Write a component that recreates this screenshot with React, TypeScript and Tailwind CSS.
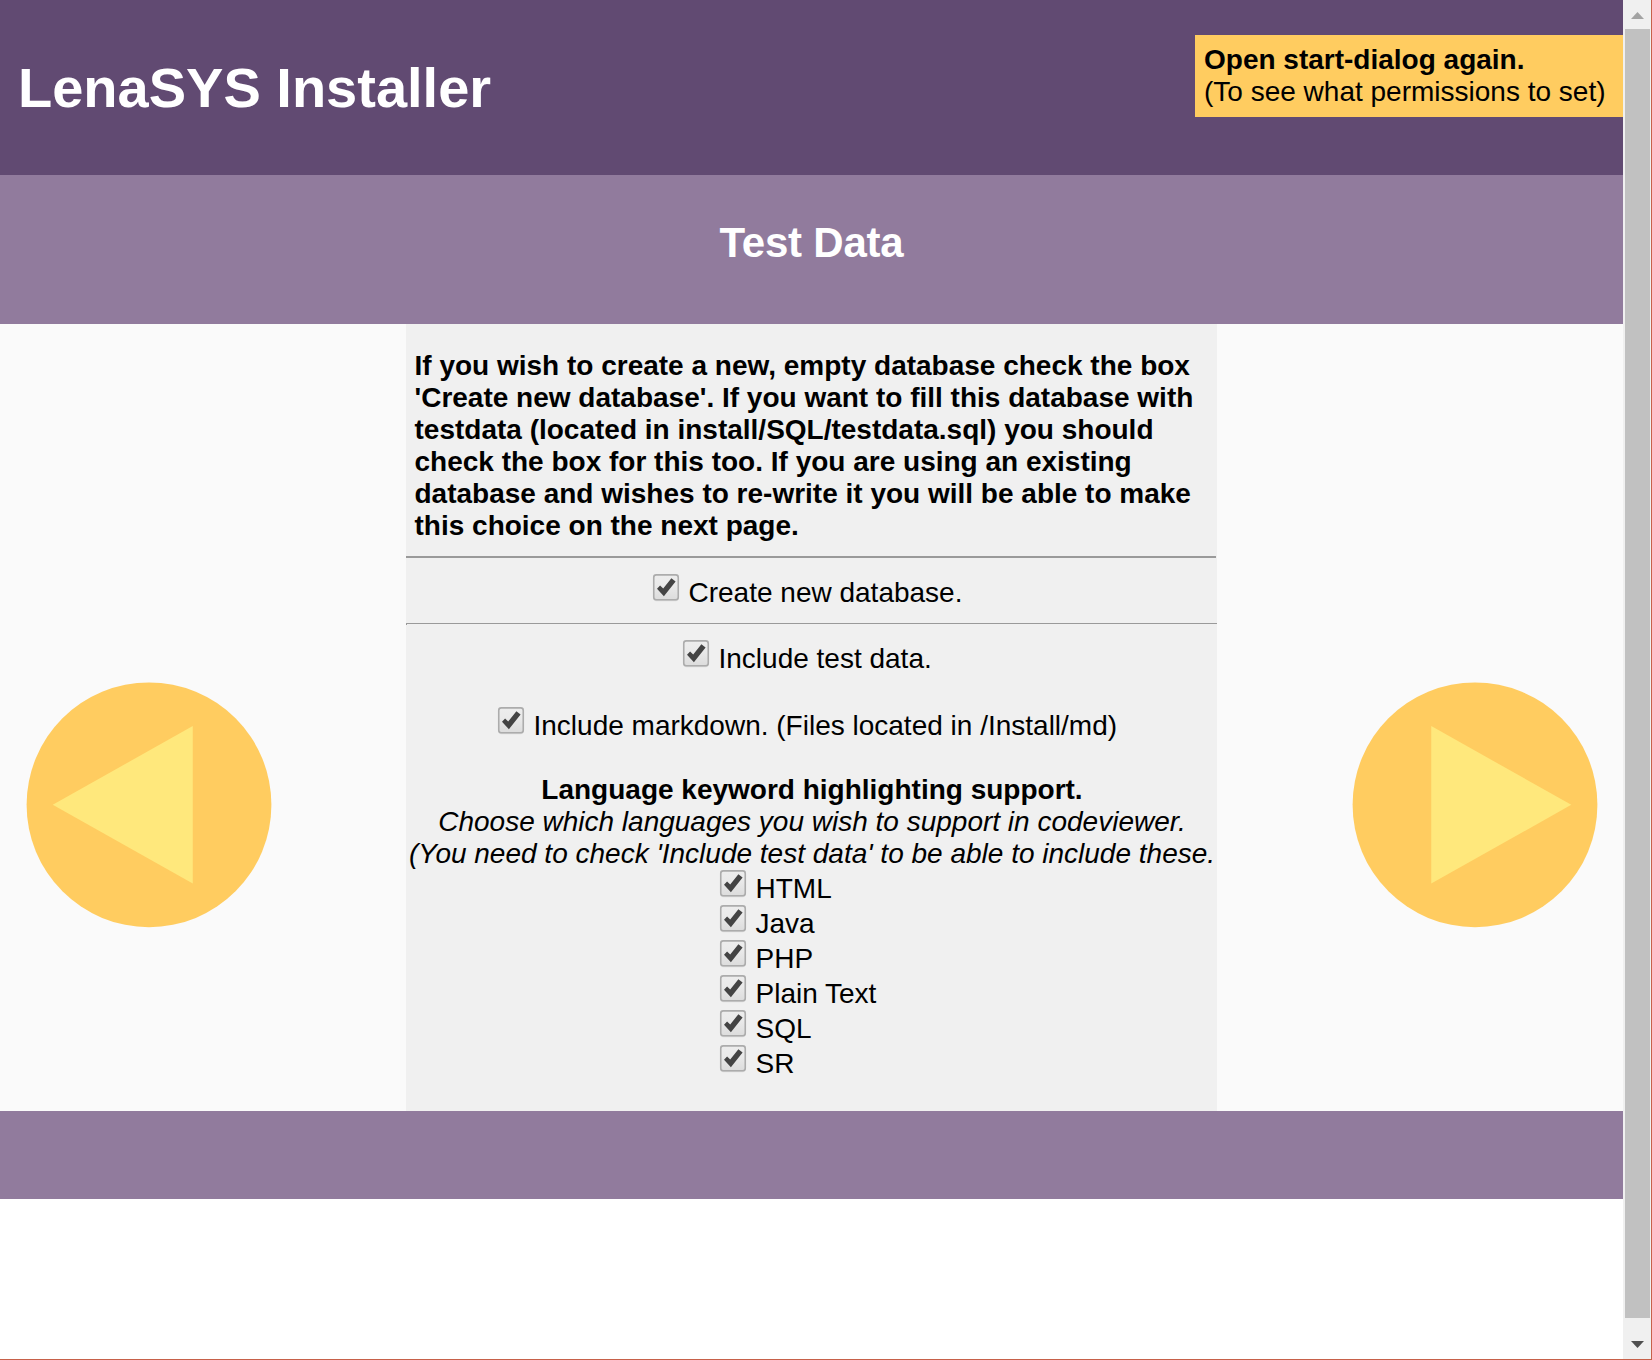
import type { ReactNode } from "react";

const languages = ["HTML", "Java", "PHP", "Plain Text", "SQL", "SR"];

function CheckBox() {
  return (
    <svg width="28" height="29" viewBox="0 0 28 29" className="-mx-px -mt-px shrink-0" aria-hidden="true">
      <defs>
        <linearGradient id="box" x1="0" y1="0" x2="0" y2="1">
          <stop offset="0" stopColor="#ededed" />
          <stop offset="0.4" stopColor="#eaeaea" />
          <stop offset="1" stopColor="#dcdcdc" />
        </linearGradient>
      </defs>
      <rect x="1.5" y="3" width="25" height="25.2" rx="3" fill="#d9d9d9" />
      <rect x="1.75" y="1.9" width="24.5" height="24.8" rx="2.5" fill="url(#box)" stroke="#acacac" strokeWidth="1.6" />
      <path d="M5 15.8 L8.1 12.6 L11.2 15.4 L19.4 5.2 L23.6 8.4 L11.9 23.2 Z" fill="#444444" />
    </svg>
  );
}

function CheckRow({ children, className = "" }: { children: ReactNode; className?: string }) {
  return (
    <label className={`flex h-[35px] items-start gap-[9.5px] whitespace-nowrap ${className}`}>
      <CheckBox />
      <span className="pt-[3px]">{children}</span>
    </label>
  );
}

function ArrowButton({ flip = false }: { flip?: boolean }) {
  return (
    <button className="block h-[246px] w-[246px]" aria-label={flip ? "Next" : "Previous"}>
      <svg viewBox="0 0 246 246" className={flip ? "size-full -scale-x-100" : "size-full"}>
        <circle cx="123" cy="122.8" r="122.4" fill="#ffcc60" />
        <polygon points="26.75,122.8 166.75,44 166.75,201.6" fill="#ffe87c" />
      </svg>
    </button>
  );
}

function ScrollBar() {
  return (
    <div className="flex w-7 flex-col bg-[#f0f0f0]">
      <div className="flex h-[29px] justify-center pt-3">
        <svg width="13" height="7" viewBox="0 0 13 7"><path d="M0 7 L6.5 0 L13 7 Z" fill="#a3a3a3" /></svg>
      </div>
      <div className="ml-0.5 w-[25px] flex-1 bg-[#c1c1c1]" />
      <div className="flex h-[41px] justify-center pt-[23px]">
        <svg width="13" height="7" viewBox="0 0 13 7"><path d="M0 0 L6.5 7 L13 0 Z" fill="#505050" /></svg>
      </div>
    </div>
  );
}

export default function App() {
  return (
    <div className="flex h-[1360px] w-[1652px] overflow-hidden border-r border-b border-[#c7614a] bg-white font-['Liberation_Sans',Arial,sans-serif] text-[28px] leading-8 text-black">
      <div className="w-[1623px]">
        <header className="flex h-[175px] items-start justify-between bg-[#614a72]">
          <h1 className="mt-14 ml-[18px] text-[56px] leading-[64px] font-bold text-white">LenaSYS Installer</h1>
          <div className="mt-[35px] h-[82px] w-[428px] bg-[#ffcc60] pt-[9px] pl-[9px] whitespace-nowrap">
            <p className="font-bold">Open start-dialog again.</p>
            <p>(To see what permissions to set)</p>
          </div>
        </header>
        <div className="h-[149px] bg-[#917b9d] pt-[44px] text-center">
          <h2 className="text-[42px] leading-[48px] font-bold tracking-[-0.22px] text-white">Test Data</h2>
        </div>
        <main className="flex h-[787px] bg-[#fafafa]">
          <div className="w-[406px] pt-[358px] pl-[26px]">
            <ArrowButton />
          </div>
          <section className="w-[811px] bg-[#f0f0f0] pt-[26px]">
            <p className="mb-[14px] pl-[8.5px] font-bold whitespace-nowrap">
              If you wish to create a new, empty database check the box<br />
              'Create new database'. If you want to fill this database with<br />
              testdata (located in install/SQL/testdata.sql) you should<br />
              check the box for this too. If you are using an existing<br />
              database and wishes to re-write it you will be able to make<br />
              this choice on the next page.
            </p>
            <hr className="mr-px mb-4 border-t-2 border-[#9a9a9a]" />
            <CheckRow className="pl-[247px]">Create new database.</CheckRow>
            <hr className="mt-[14px] h-0.5 border-t border-l border-[#9a9a9a]" />
            <CheckRow className="mt-[15px] mb-8 pl-[277px]">Include test data.</CheckRow>
            <CheckRow className="mb-8 pl-[92px]">Include markdown. (Files located in /Install/md)</CheckRow>
            <div className="pl-px text-center whitespace-nowrap">
              <p className="font-bold">Language keyword highlighting support.</p>
              <p className="italic">Choose which languages you wish to support in codeviewer.</p>
              <p className="italic">(You need to check 'Include test data' to be able to include these.</p>
            </div>
            <div className="pl-[314px]">
              {languages.map((name) => (
                <CheckRow key={name}>{name}</CheckRow>
              ))}
            </div>
          </section>
          <div className="flex-1 pt-[358px] pl-[135px]">
            <ArrowButton flip />
          </div>
        </main>
        <footer className="h-[88px] bg-[#917b9d]" />
      </div>
      <ScrollBar />
    </div>
  );
}
